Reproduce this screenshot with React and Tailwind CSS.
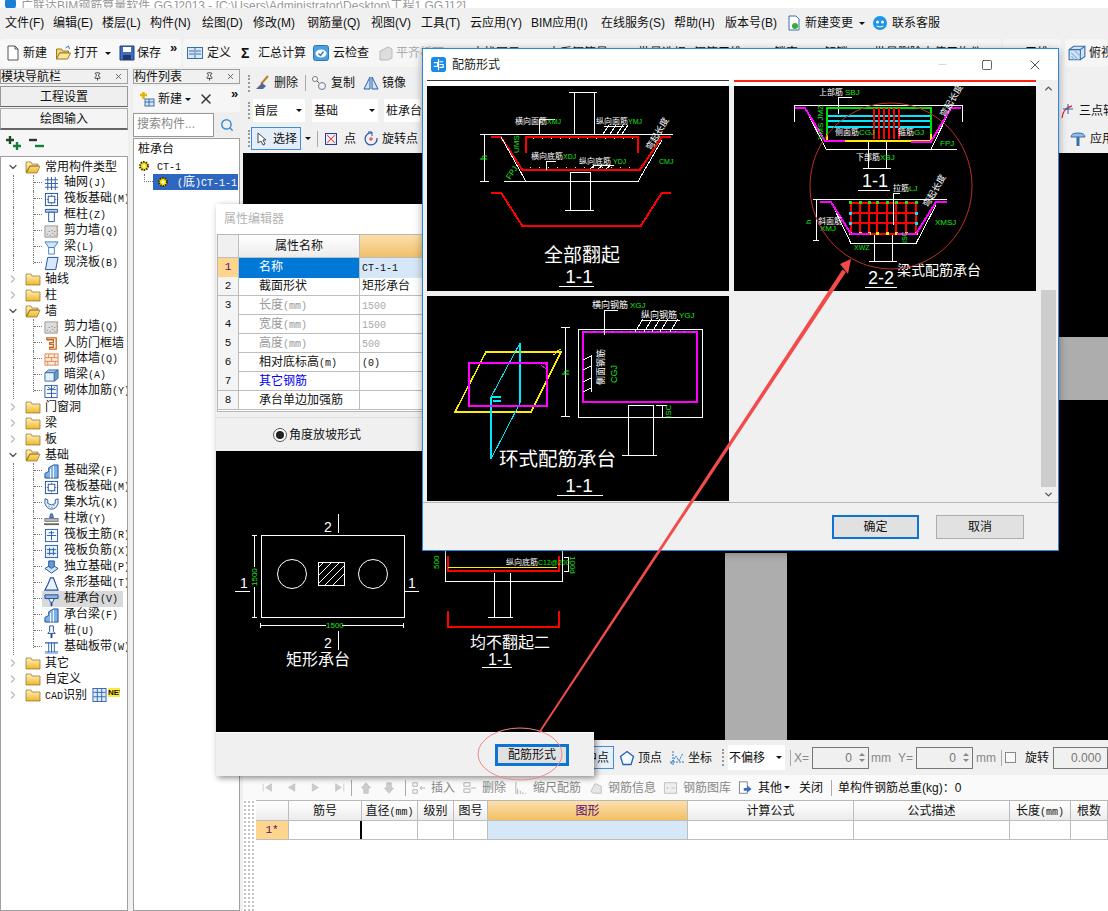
// App.jsx
import { ChevronDown, ChevronRight, ChevronUp, X, Minus, Square, Search, Pin } from 'lucide-react';

const menus = [
    ['文件(F)', 'w-[48px]'], ['编辑(E)', 'w-[49px]'], ['楼层(L)', 'w-[48px]'], ['构件(N)', 'w-[52px]'],
    ['绘图(D)', 'w-[51px]'], ['修改(M)', 'w-[54px]'], ['钢筋量(Q)', 'w-[64px]'], ['视图(V)', 'w-[50px]'],
    ['工具(T)', 'w-[49px]'], ['云应用(Y)', 'w-[61px]'], ['BIM应用(I)', 'w-[70px]'], ['在线服务(S)', 'w-[73px]'],
    ['帮助(H)', 'w-[51px]'], ['版本号(B)', 'w-[61px]'],
];

const Svg = ({ children, className = 'w-4 h-4' }) => (
    <svg viewBox="0 0 16 16" className={`${className} shrink-0`} fill="none">{children}</svg>
);

// latin runs get the narrow fixed pitch the old bitmap font has
const Mixed = ({ text }) => text.split(/([\x00-\x7f]+)/).map((part, i) => (
    /[\x00-\x7f]/.test(part)
        ? <span key={i} className="font-['Liberation_Mono'] text-[10px]">{part}</span>
        : <span key={i}>{part}</span>
));

const icons = {
    grid: <g stroke="#2a5caa"><path d="M1 4h14M1 8h14M1 12h14M4 1v14M8 1v14M12 1v14" /></g>,
    raft: <g stroke="#1d4f9c"><rect x="1.5" y="1.5" width="13" height="13" /><rect x="4.5" y="4.5" width="7" height="7" /><path d="M1 8h3M12 8h3M8 1v3M8 12v3" strokeDasharray="1 1" /></g>,
    col: <g stroke="#1d4f9c" fill="#bcd6f2"><path d="M1.5 1.5h13v3h-13z" /><path d="M5 4.5h6v10H5z" fill="#fff" /></g>,
    shear: <g><rect x="1" y="2" width="13" height="12" fill="#ddd" stroke="#999" /><path d="M3 11h1M6 12h1M9 10h1M11 12h1M5 8h1M8 7h1M11 8h1" stroke="#666" /><path d="M14.5 2v12" stroke="#e0812a" strokeDasharray="2 2" /></g>,
    beam: <g stroke="#3c7fc0" fill="#cfe5f8"><path d="M1 2h14l-4 6H5z" /><path d="M5 8h6v7H5z" fill="#fff" /></g>,
    slab: <path d="M4 1.5h11l-2.5 13h-11z" fill="#d6e8f9" stroke="#1d4f9c" />,
    door: <path d="M3 2h10v12H6v-2h4V9H6V7h4V4H3z" fill="#fff" stroke="#c9651d" strokeWidth="1.4" />,
    brick: <g stroke="#e08a55" fill="#fbe9dc"><rect x="1" y="2" width="14" height="12" /><path d="M1 6h14M1 10h14M5 2v4M11 2v4M8 6v4M4 10v4M12 10v4" /></g>,
    hide: <g stroke="#3a6ea8"><path d="M1 5l4-3h10l-4 3z" fill="#9ec5ea" /><path d="M1 5h10v9H1z" fill="#e4f0fb" /><path d="M11 5l4-3v9l-4 3z" fill="#6c9bca" /></g>,
    mesh: <g stroke="#2a5caa"><rect x="1" y="1.5" width="13" height="13" /><path d="M8 1v14M3 6h10M3 10h10M4 3l4 3 4-3" /></g>,
    fbeam: <g stroke="#1d4f9c"><path d="M1 15V10l4-2V4l5-3h5v14z" fill="#7fb0e0" /><path d="M7 15V5M10 15V2" stroke="#fff" /></g>,
    pit: <g><path d="M1 3l3 1v4q4 3 8 0V4l3-1v5q-2 6-7 6T1 8z" fill="#e4eef8" stroke="#2a5caa" /><path d="M5 11h1M8 12h1M10 10h1" stroke="#2a5caa" /></g>,
    pier: <g><path d="M6 6l1-4h2l1 4z" fill="#5f8fd0" stroke="#2a5caa" /><rect x="1" y="7" width="14" height="3" fill="#bbb" stroke="#777" /><path d="M0 13h16" stroke="#666" strokeWidth="2" /></g>,
    rmain: <g stroke="#2a5caa"><rect x="1.5" y="1.5" width="13" height="13" fill="#f4f9ff" /><path d="M8 3v10M3 8h10M5 5h6" /></g>,
    rneg: <g stroke="#2a5caa"><rect x="1.5" y="1.5" width="13" height="13" fill="#e6f1fc" /><path d="M3 6h10M3 10h10M6 4v8M10 4v8" /></g>,
    indep: <g stroke="#1d4f9c"><path d="M1 9l7-4 7 4-7 5z" fill="#cfe3f7" /><path d="M5 7V1h6v6l-3 2z" fill="#6a9ad0" /></g>,
    strip: <path d="M1 15l3-6 3-7h3l5 13z" fill="#eaf3fc" stroke="#1d4f9c" strokeWidth="1.2" />,
    cap: <g stroke="#1d4f9c"><path d="M1 3h14v4H1z" fill="#89b4df" /><path d="M5 7h6l-2 4H7z" fill="#fff" /><path d="M8 11v4" strokeWidth="2" /></g>,
    pile: <g stroke="#1d4f9c"><path d="M6 2h4v6l2 2H4l2-2z" fill="#fff" /><path d="M8 10v5" strokeWidth="2" /></g>,
    band: <g stroke="#2a5caa"><path d="M1 3h14M1 13h14" strokeWidth="1.4" /><path d="M5 3v10M11 3v10M8 3v10" /><path d="M1 14h14" stroke="#9fc3e8" strokeWidth="2" /></g>,
};

const tree = [
    { t: '常用构件类型', open: true, kids: [['grid', '轴网(J)'], ['raft', '筏板基础(M)'], ['col', '框柱(Z)'], ['shear', '剪力墙(Q)'], ['beam', '梁(L)'], ['slab', '现浇板(B)']] },
    { t: '轴线' },
    { t: '柱' },
    { t: '墙', open: true, kids: [['shear', '剪力墙(Q)'], ['door', '人防门框墙'], ['brick', '砌体墙(Q)'], ['hide', '暗梁(A)'], ['mesh', '砌体加筋(Y)']] },
    { t: '门窗洞' },
    { t: '梁' },
    { t: '板' },
    { t: '基础', open: true, kids: [['fbeam', '基础梁(F)'], ['raft', '筏板基础(M)'], ['pit', '集水坑(K)'], ['pier', '柱墩(Y)'], ['rmain', '筏板主筋(R)'], ['rneg', '筏板负筋(X)'], ['indep', '独立基础(P)'], ['strip', '条形基础(T)'], ['cap', '桩承台(V)', true], ['fbeam', '承台梁(F)'], ['pile', '桩(U)'], ['band', '基础板带(W)']] },
    { t: '其它' },
    { t: '自定义' },
    { t: 'CAD识别', cad: true },
];

const Folder = ({ open }) => (
    <svg viewBox="0 0 16 14" className="w-4 h-[14px] shrink-0">
        <defs>
            <linearGradient id="fold" x1="0" y1="0" x2="0" y2="1"><stop offset="0" stopColor="#fff3b8" /><stop offset="1" stopColor="#efb52f" /></linearGradient>
        </defs>
        {open ? (
            <path d="M1 2h5l1 2h6v2H5L2 12 1 12zM5 6h10l-3 7H1z" fill="url(#fold)" stroke="#8d6a1f" strokeWidth=".7" />
        ) : (
            <path d="M1 2h5l1 2h8v9H1z" fill="url(#fold)" stroke="#8d6a1f" strokeWidth=".7" />
        )}
    </svg>
);

function TreeGroup({ node }) {
    return (
        <>
            <div className="flex h-4 items-center">
                <div className="w-[6px] shrink-0" />
                {node.open ? <ChevronDown size={12} strokeWidth={2.5} className="text-[#555] shrink-0" /> : <ChevronRight size={12} strokeWidth={2.5} className="text-[#bbb] shrink-0" />}
                <div className="w-[6px] shrink-0" />
                <Folder open={node.open} />
                <span className="ml-[4px] whitespace-nowrap"><Mixed text={node.t} /></span>
                {node.cad && (
                    <>
                        <Svg className="w-[15px] h-[14px] ml-[5px]"><rect x=".5" y=".5" width="15" height="15" fill="#dceafa" stroke="#2a5caa" /><path d="M5.5 1v14M10.5 1v14M1 5h14M1 10h14" stroke="#2a5caa" /></Svg>
                        <span className="ml-[1px] bg-[#ffe83d] text-[8px] leading-[9px] font-bold self-start mt-[1px] w-[12px] overflow-hidden">NEW</span>
                    </>
                )}
            </div>
            {node.open && node.kids.map((k, i) => (
                <div key={i} className="flex h-4">
                    <div className="w-[12px] shrink-0" />
                    <div className="w-[20px] shrink-0 border-l border-dotted border-[#777]" />
                    <div className={`w-[9px] shrink-0 border-l border-dotted border-[#777] ${i === node.kids.length - 1 ? 'h-[9px]' : ''}`}>
                        <div className="h-2 border-b border-dotted border-[#777]" />
                    </div>
                    <div className={`flex items-center w-[81px] pl-[2px] shrink-0 ${k[2] ? 'bg-[#d9d9d9]' : ''}`}>
                        <Svg className="w-[15px] h-[15px]">{icons[k[0]]}</Svg>
                        <span className="ml-[5px] whitespace-nowrap leading-4"><Mixed text={k[1]} /></span>
                    </div>
                </div>
            ))}
        </>
    );
}

const PanelHeader = ({ title }) => (
    <div className="h-[15px] border border-[#a0a0a0] bg-[#f0f0f0] flex items-center text-[12px] leading-none overflow-hidden shrink-0">
        <span className="flex-1 whitespace-nowrap">{title}</span>
        <Pin size={9} className="mr-[12px] text-[#222]" />
        <X size={9} className="mr-[4px] text-[#444]" />
    </div>
);

const Caret = ({ className = '' }) => (
    <span className={`w-0 h-0 border-x-[3px] border-x-transparent border-t-[3px] border-t-[#111] shrink-0 ${className}`} />
);

const DocIcon = () => <Svg><path d="M3 1h7l3 3v11H3z" fill="#fff" stroke="#555" /><path d="M10 1v3h3" stroke="#555" /></Svg>;
const OpenIcon = () => <Svg className="w-[17px] h-4"><path d="M1 4h5l1 2h6v2H4l-2 6H1z" fill="#f6d578" stroke="#9a7a22" /><path d="M4 8h11l-3 6H1z" fill="#fbe59a" stroke="#9a7a22" /><path d="M10 3l3-2 1 3" stroke="#3a76c4" /></Svg>;
const SaveIcon = () => <Svg><path d="M1 1h14v14H1z" fill="#3c6fc0" stroke="#1e3f7e" /><rect x="4" y="2" width="8" height="5" fill="#fff" /><rect x="4" y="10" width="8" height="5" fill="#25386a" /></Svg>;

const ToolText = ({ children, className = '' }) => <span className={`whitespace-nowrap shrink-0 ${className}`}>{children}</span>;

function TopToolbar() {
    return (
        <div className="h-[30px] flex items-center text-[12px] shrink-0">
            <div className="h-[28px] w-[181px] bg-[#f8f8f8] rounded-sm flex items-center pl-[5px] shrink-0">
                <DocIcon /><ToolText className="ml-[2px]">新建</ToolText>
                <div className="ml-[8px]"><OpenIcon /></div><ToolText className="ml-[2px]">打开</ToolText>
                <Caret className="ml-[7px]" />
                <div className="ml-[8px]"><SaveIcon /></div><ToolText className="ml-[2px]">保存</ToolText>
                <span className="ml-[9px] mb-3 text-[13px] font-bold leading-none">»</span>
            </div>
            <div className="h-[28px] w-[818px] ml-[2px] bg-[#f6f6f6] rounded-sm flex items-center pl-[4px] shrink-0 overflow-hidden">
                <Svg><rect x=".5" y="2.5" width="15" height="11" fill="#d9e8f8" stroke="#3a6ea8" /><path d="M2 6h5M2 9h5M9 6h5M9 9h5M8 3v10" stroke="#3a6ea8" /></Svg>
                <ToolText className="ml-[4px]">定义</ToolText>
                <span className="ml-[10px] font-bold text-[14px] leading-none w-[12px] shrink-0">Σ</span>
                <ToolText className="ml-[5px]">汇总计算</ToolText>
                <Svg className="w-4 h-4 ml-[7px]"><rect x=".5" y=".5" width="15" height="15" rx="2" fill="#4a9fe0" stroke="#2a76ba" /><ellipse cx="8" cy="8.5" rx="5.5" ry="4" fill="#fff" /><path d="M5.5 8.5l2 2 3-4" stroke="#2a76ba" strokeWidth="1.3" /></Svg>
                <ToolText className="ml-[4px]">云检查</ToolText>
                <Svg className="w-4 h-4 ml-[9px]"><path d="M2 6l8-4 4 2v9l-4 2H2z" fill="#ddd" stroke="#bbb" /></Svg>
                <ToolText className="ml-[2px] w-[76px] text-[#aaa]">平齐板顶</ToolText>
                <ToolText className="w-[76px]">查找图元</ToolText>
                <ToolText className="w-[90px]">查看钢筋量</ToolText>
                <ToolText className="w-[56px]">批量选择</ToolText>
                <ToolText className="w-[80px]">钢筋三维</ToolText>
                <ToolText className="w-[50px]">锁定</ToolText>
                <ToolText className="w-[50px]">解锁</ToolText>
                <ToolText>批量删除未使用构件</ToolText>
            </div>
            <div className="h-[28px] ml-[2px] w-[58px] bg-[#f6f6f6] rounded-sm flex items-center pl-[22px] shrink-0">三维</div>
            <div className="h-[28px] ml-[4px] flex-1 bg-[#f6f6f6] rounded-sm flex items-center pl-[3px] overflow-hidden">
                <Svg className="w-[18px] h-[18px]"><path d="M1 5l4-3h10v9l-4 3H1z" fill="#cfe3f7" stroke="#3a6ea8" /><path d="M1 5h10v9M11 5l4-3" stroke="#3a6ea8" /><path d="M3 8l6 6M3 11l3 3M6 6l5 5" stroke="#8fb6dc" /></Svg>
                <ToolText className="ml-[3px]">俯视</ToolText>
            </div>
        </div>
    );
}

function LeftNav() {
    return (
        <div className="w-[128px] flex flex-col shrink-0">
            <PanelHeader title="模块导航栏" />
            <button className="h-[21px] mt-[2px] border border-[#999] border-b-[#666] bg-[#efefef] text-[12px] shrink-0">工程设置</button>
            <button className="h-[22px] mt-[1px] border border-[#aaa] border-b-2 border-b-[#666] bg-[#f4f4f4] text-[12px] shrink-0">绘图输入</button>
            <div className="h-[26px] flex items-center pl-[5px] bg-[#f6f6f6] shrink-0">
                <Svg><path d="M1 5h8M5 1v8" stroke="#1c4a2a" strokeWidth="2.4" /><path d="M8 11h8M12 7v8" stroke="#12803a" strokeWidth="2.4" /></Svg>
                <Svg className="w-4 h-4 ml-[7px]"><path d="M1 5h8" stroke="#333" strokeWidth="2.4" /><path d="M7 11h9" stroke="#12803a" strokeWidth="2.4" /></Svg>
            </div>
            <div className="flex-1 border border-[#a0a0a0] bg-white pt-[1px] text-[12px] overflow-hidden text-[#111]">
                <div className="h-px" />
                {tree.map((n) => <TreeGroup key={n.t} node={n} />)}
            </div>
        </div>
    );
}

const Gear = () => (
    <svg viewBox="0 0 12 12" className="w-3 h-3 shrink-0"><circle cx="6" cy="6" r="4" fill="#ffe000" stroke="#3a3000" strokeDasharray="1.5 1" strokeWidth="2" /><circle cx="6" cy="6" r="1.5" fill="#fff" /></svg>
);

function ListPanel() {
    return (
        <div className="w-[107px] ml-[5px] flex flex-col shrink-0">
            <PanelHeader title="构件列表" />
            <div className="h-[26px] mt-[2px] bg-[#f6f6f6] flex items-center pl-[6px] text-[12px] shrink-0">
                <Svg><path d="M1 4h7M4.5 1v7" stroke="#e3b400" strokeWidth="2.5" /><rect x="6" y="8" width="9" height="7" fill="#dbe9f8" stroke="#3a6ea8" /><path d="M6 11h9M10 8v7" stroke="#3a6ea8" /></Svg>
                <span className="ml-[3px] whitespace-nowrap">新建</span>
                <Caret className="ml-[3px]" />
                <X size={16} strokeWidth={2.2} className="ml-[7px] text-[#333] shrink-0" />
                <span className="ml-[17px] mb-3 text-[13px] font-bold leading-none">»</span>
            </div>
            <div className="h-[24px] mt-[1px] flex shrink-0">
                <div className="w-[81px] border border-[#999] bg-white text-[12px] text-[#888] pl-[3px] leading-[21px] whitespace-nowrap overflow-hidden">搜索构件...</div>
                <div className="flex-1 bg-[#eee] flex items-center justify-center"><Search size={14} strokeWidth={2.5} className="text-[#3a8fd8]" /></div>
            </div>
            <div className="flex-1 mt-[1px] border border-[#a0a0a0] bg-white text-[12px] text-[#111] overflow-hidden">
                <div className="pl-[4px] h-[20px] leading-[20px]">桩承台</div>
                <div className="flex items-center h-[14px] pl-[4px]"><Gear /><span className="ml-[7px]"><Mixed text="CT-1" /></span></div>
                <div className="flex h-4 mt-[1px]">
                    <div className="w-[9px] ml-[10px] h-[8px] border-l border-b border-dotted border-[#777] shrink-0" />
                    <div className="w-[85px] bg-[#2f66bf] text-white flex items-center pl-[4px] whitespace-nowrap overflow-hidden shrink-0">
                        <Gear />
                        <span className="ml-[8px]"><Mixed text="(" />底<Mixed text=")CT-1-1" /></span>
                    </div>
                </div>
            </div>
        </div>
    );
}

function RightToolbars() {
    const grip = <div className="w-[3px] h-[17px] border-l-2 border-dotted border-[#999] mx-[3px] shrink-0" />;
    return (
        <div className="text-[12px] shrink-0">
            <div className="h-[28px] flex items-center pl-[2px] bg-[#f0f0f0]">
                {grip}
                <Svg><path d="M14 1L7 9" stroke="#b7842f" strokeWidth="2" /><path d="M8 8l-6 6h7l3-3z" fill="#3a6ea8" /><path d="M4 13l5-4" stroke="#d33" /></Svg>
                <span className="ml-[4px] whitespace-nowrap">删除</span>
                <div className="w-px h-4 bg-[#aaa] ml-[7px] shrink-0" />
                <Svg className="w-4 h-4 ml-[5px]"><circle cx="4" cy="4" r="2.5" stroke="#777" fill="#fff" /><circle cx="11" cy="11" r="3.5" stroke="#777" fill="#eef" /><path d="M6 6l2 2" stroke="#3a6ea8" /></Svg>
                <span className="ml-[4px] whitespace-nowrap">复制</span>
                <Svg className="w-4 h-4 ml-[8px]"><path d="M7 2L1 14h6zM9 2l6 12H9z" fill="#cfe3f7" stroke="#2a5caa" /></Svg>
                <span className="ml-[3px] whitespace-nowrap">镜像</span>
            </div>
            <div className="h-[27px] flex items-center pl-[2px] bg-[#f0f0f0]">
                {grip}
                <div className="w-[52px] h-[23px] bg-white flex items-center pl-[1px] ml-[-1px] shrink-0"><span className="flex-1">首层</span><Caret className="mr-[3px]" /></div>
                <div className="w-[66px] h-[23px] bg-white flex items-center pl-[2px] ml-[7px] shrink-0"><span className="flex-1">基础</span><Caret className="mr-[3px]" /></div>
                <div className="w-[36px] h-[23px] bg-white flex items-center pl-[2px] ml-[6px] shrink-0 whitespace-nowrap">桩承台</div>
                <div className="ml-auto w-[48px] flex items-center overflow-hidden whitespace-nowrap">
                    <Svg><path d="M2 15Q3 5 12 3" stroke="#d33" strokeWidth="1.3" /><path d="M8 1v10M3 6h10" stroke="#2a5caa" /></Svg>
                    <span className="ml-[3px]">三点轴</span>
                </div>
            </div>
            <div className="h-[29px] flex items-center pl-[2px] bg-[#f0f0f0]">
                {grip}
                <div className="w-[50px] h-[23px] border border-[#3a8fd8] bg-[#e3eefa] flex items-center pl-[4px] ml-[-3px] shrink-0">
                    <svg viewBox="0 0 12 14" className="w-3 h-[14px] shrink-0"><path d="M2 1v10l3-2 2 4 2-1-2-4h3z" fill="#fff" stroke="#444" /></svg>
                    <span className="ml-[5px] whitespace-nowrap">选择</span>
                </div>
                <Caret className="ml-[4px]" />
                <div className="w-px h-4 bg-[#aaa] ml-[6px] shrink-0" />
                <Svg className="w-3 h-3 ml-[7px]"><rect x=".7" y=".7" width="14.6" height="14.6" fill="#eef2f8" stroke="#2a3f8c" strokeWidth="1.4" /><path d="M3 3l10 10M13 3L3 13" stroke="#d33" strokeWidth="1.4" /></Svg>
                <span className="ml-[7px] whitespace-nowrap">点</span>
                <Svg className="w-4 h-4 ml-[7px]"><path d="M9 2a6 6 0 1 0 5 5" stroke="#2a5caa" strokeWidth="1.3" /><path d="M5 1h4v4" stroke="#2a5caa" /><path d="M6 8h4M8 6v4" stroke="#d33" /></Svg>
                <span className="ml-[3px] whitespace-nowrap">旋转点</span>
                <div className="ml-auto w-[38px] flex items-center overflow-hidden whitespace-nowrap">
                    <Svg><path d="M1 6q0-4 7-4t7 4z" fill="#8fbce8" stroke="#3a6ea8" /><path d="M8 6v9" stroke="#3a6ea8" strokeWidth="3" /></Svg>
                    <span className="ml-[4px]">应用</span>
                </div>
            </div>
        </div>
    );
}

function Spin({ value }) {
    return (
        <div className="w-[57px] h-[22px] border border-[#777] bg-[#f0f0f0] flex items-center justify-end text-[12px] text-[#777] shrink-0">
            {value}
            <div className="ml-[7px] mr-[3px] flex flex-col gap-[3px]">
                <span className="block w-0 h-0 border-x-[3px] border-x-transparent border-b-[3px] border-b-[#888]" />
                <span className="block w-0 h-0 border-x-[3px] border-x-transparent border-t-[3px] border-t-[#888]" />
            </div>
        </div>
    );
}

function StatusBar() {
    const S = 'whitespace-nowrap shrink-0';
    return (
        <div className="h-[35px] bg-[#f0f0f0] flex items-center text-[12px] shrink-0 overflow-hidden">
            <div className="w-[337px] shrink-0" />
            <div className="w-[34px] h-[23px] border border-[#3a8fd8] bg-[#e6f0fa] flex items-center justify-center text-[#111] shrink-0">中点</div>
            <Svg className="w-4 h-4 ml-[5px]"><path d="M8 1.5l6.5 5-2.500 8H4l-2.500-8z" stroke="#1f62b8" strokeWidth="1.3" fill="#f4f9ff" /></Svg>
            <span className={`ml-[3px] ${S}`}>顶点</span>
            <Svg className="w-4 h-4 ml-[7px]"><path d="M1 12h14M4 1v14M2 14l5-8 3 5 4-8" stroke="#2a7ac8" strokeDasharray="2 1" /></Svg>
            <span className={`ml-[3px] ${S}`}>坐标</span>
            <div className="w-[3px] h-[17px] border-l-2 border-dotted border-[#999] ml-[10px] shrink-0" />
            <div className="w-[57px] h-[25px] bg-white flex items-center pl-[1px] ml-[3px] whitespace-nowrap shrink-0"><span className="flex-1">不偏移</span><Caret className="mr-[3px]" /></div>
            <div className="w-px h-4 bg-[#aaa] ml-[5px] shrink-0" />
            <span className={`ml-[3px] text-[#888] w-[18px] ${S}`}>X=</span>
            <Spin value="0" />
            <span className={`ml-[2px] text-[#888] w-[27px] ${S}`}>mm</span>
            <span className={`text-[#888] w-[18px] ${S}`}>Y=</span>
            <Spin value="0" />
            <span className={`ml-[3px] text-[#888] w-[24px] ${S}`}>mm</span>
            <div className="w-px h-4 bg-[#aaa] ml-[1px] shrink-0" />
            <div className="w-[11px] h-[11px] border border-[#888] bg-[#f8f8f8] ml-[3px] shrink-0" />
            <span className={`ml-[9px] ${S}`}>旋转</span>
            <div className="w-[55px] h-[22px] ml-[4px] border border-[#777] bg-[#f0f0f0] text-[#777] flex items-center pl-[17px] shrink-0">0.000</div>
        </div>
    );
}

const tri = (d) => <path d={d} fill="#ccc" stroke="#bbb" />;

function BottomToolbar() {
    const grey = 'text-[#888] whitespace-nowrap shrink-0';
    return (
        <div className="h-[25px] bg-[#fafafa] flex items-center text-[12px] shrink-0 pl-[19px]">
            <Svg className="w-[10px] h-[13px]">{tri('M2 2v12M15 2L6 8l9 6z')}</Svg>
            <Svg className="w-[10px] h-[13px] ml-[14px]">{tri('M14 2L4 8l10 6z')}</Svg>
            <Svg className="w-[10px] h-[13px] ml-[15px]">{tri('M2 2l10 6-10 6z')}</Svg>
            <Svg className="w-[10px] h-[13px] ml-[14px]">{tri('M14 2v12M1 2l9 6-9 6z')}</Svg>
            <div className="w-px h-4 bg-[#aaa] ml-[6px] shrink-0" />
            <Svg className="w-3 h-3 ml-[8px]">{tri('M8 1l6 7h-3v7H5V8H2z')}</Svg>
            <Svg className="w-3 h-3 ml-[11px]">{tri('M8 15l6-7h-3V1H5v7H2z')}</Svg>
            <div className="w-px h-4 bg-[#aaa] ml-[10px] shrink-0" />
            <Svg className="w-4 h-[14px] ml-[5px]"><path d="M1 2h5v4H1zM1 10h5v4H1zM9 8h6M11 6L9 8l2 2" stroke="#aaa" /></Svg>
            <span className={`${grey} ml-[4px]`}>插入</span>
            <Svg className="w-4 h-[14px] ml-[7px]"><path d="M1 2h7v4H1zM1 9h7v4H1zM9 8h6" stroke="#aaa" /></Svg>
            <span className={`${grey} ml-[4px]`}>删除</span>
            <Svg className="w-[14px] h-[14px] ml-[9px]"><path d="M1 1v14M3 9v6M6 11v4M9 13v2M12 14v1" stroke="#aaa" /></Svg>
            <span className={`${grey} ml-[4px]`}>缩尺配筋</span>
            <Svg className="w-[14px] h-[14px] ml-[8px]"><path d="M2 12l5-9 7 3v8H5z" fill="#e5e5e5" stroke="#bbb" /></Svg>
            <span className={`${grey} ml-[5px]`}>钢筋信息</span>
            <Svg className="w-[15px] h-[14px] ml-[7px]"><rect x="1" y="2" width="14" height="12" fill="#eee" stroke="#bbb" /><path d="M3 8h3M9 8h4" stroke="#bbb" /></Svg>
            <span className={`${grey} ml-[5px]`}>钢筋图库</span>
            <Svg className="w-[15px] h-[14px] ml-[7px]"><rect x="1" y="1" width="9" height="13" fill="#fff" stroke="#778" /><path d="M6 8h4V5l5 4-5 4v-2H6z" fill="#3a6ec4" /></Svg>
            <span className="ml-[5px] whitespace-nowrap shrink-0">其他</span>
            <Caret className="ml-[2px]" />
            <span className="ml-[9px] whitespace-nowrap shrink-0">关闭</span>
            <div className="w-px h-4 bg-[#aaa] ml-[8px] shrink-0" />
            <span className="ml-[6px] whitespace-nowrap shrink-0">单构件钢筋总重(kg)：0</span>
        </div>
    );
}

const rebarHeads = ['', '筋号', '直径(mm)', '级别', '图号', '图形', '计算公式', '公式描述', '长度(mm)', '根数'];

function RebarTable() {
    return (
        <div className="flex flex-1 min-h-0 bg-white">
            <div className="w-[13px] shrink-0 bg-[radial-gradient(#c4c4c4_1px,transparent_1px)] bg-[length:4px_4px]" />
            <div className="flex-1 text-[12px]">
                <div className="grid grid-cols-[33px_73px_56px_36px_34px_200px_166px_156px_61px_37px] border-t border-[#b8b8b8] h-[21px]">
                    {rebarHeads.map((h, i) => (
                        <div key={i} className={`flex items-center justify-center border-r border-b border-[#bdbdbd] whitespace-nowrap overflow-hidden ${i === 5 ? 'bg-linear-to-b from-[#fbe0ae] to-[#f3bf62] text-[#5a0a78]' : 'bg-linear-to-b from-white to-[#ececec]'}`}><span><Mixed text={h} /></span></div>
                    ))}
                </div>
                <div className="grid grid-cols-[33px_73px_56px_36px_34px_200px_166px_156px_61px_37px] border-b border-[#bdbdbd] h-[19px]">
                    {rebarHeads.map((h, i) => (
                        <div key={i} className={`flex items-center justify-center border-r ${i === 1 ? 'border-r-2 border-black' : 'border-[#bdbdbd]'} ${i === 0 ? 'bg-[#fdd58d] text-[#5a0a78] font-[\'Liberation_Mono\'] text-[11px]' : i === 5 ? 'bg-[#d6e8f7]' : ''}`}>{i === 0 ? '1*' : ''}</div>
                    ))}
                </div>
            </div>
        </div>
    );
}

const propRows = [
    ['名称', 'CT-1-1'], ['截面形状', '矩形承台'], ['长度(mm)', '1500', 1], ['宽度(mm)', '1500', 1],
    ['高度(mm)', '500', 1], ['相对底标高(m)', '(0)'], ['其它钢筋', '', 0, 1], ['承台单边加强筋', ''],
];

const W = ({ d, c = '#fff', w = 1 }) => <path d={d} fill="none" stroke={c} strokeWidth={w} />;
const T = ({ x, y, s = 9, c = '#fff', r, a, children }) => (
    <text x={x} y={y} fontSize={s} fill={c} textAnchor={a} transform={r !== undefined ? `rotate(${r} ${x} ${y})` : undefined}>{children}</text>
);

function PreviewDrawing() {
    return (
        <svg viewBox="216 452 378 281" className="w-[378px] h-[281px] block" shapeRendering="crispEdges">
            <defs><clipPath id="hat"><rect x="318" y="563" width="27" height="24" /></clipPath></defs>
            <W d="M261.5 536.5H404.5V618.5H261.5Z" />
            <circle cx="292" cy="575" r="14.5" stroke="#fff" fill="none" shapeRendering="auto" />
            <circle cx="373" cy="575" r="14.5" stroke="#fff" fill="none" shapeRendering="auto" />
            <W d="M318.5 563.5H344.5V586.5H318.5Z" />
            <g clipPath="url(#hat)"><W d="M300 587L324 563M308 587L332 563M316 587L340 563M324 587L348 563M332 587L356 563" /></g>
            <W d="M338.5 515V534M338.5 632V651M235 592.5H250M404 592.5H419" />
            <W d="M254.5 536V619M252 536.5H257M252 618.5H257M260 626.5H404M260.5 624V629M403.500 624V629" />
            <T x="324" y="533" s="14">2</T>
            <T x="324" y="649" s="14">2</T>
            <T x="240" y="589" s="14">1</T>
            <T x="408" y="589" s="14">1</T>
            <rect x="250" y="568" width="8" height="20" fill="#000" />
            <T x="257" y="587" s="8" c="#19e619" r={-90}>1500</T>
            <rect x="326" y="622" width="16" height="8" fill="#000" />
            <T x="326" y="629" s="8" c="#19e619">1500</T>
            <T x="286" y="666" s="16">矩形承台</T>
            <W d="M447.5 557V571.5H558.5V557" c="#ff0000" w="2" />
            <W d="M448 568.5H557" c="#ffee00" />
            <W d="M445.5 550V582.5H562.5V550" />
            <W d="M494.5 574V618.5H510.5V574M488 618.5H513" />
            <W d="M447.5 612V627.5H558.5V612" c="#ff0000" w="2" />
            <W d="M564 558H568V572H564" />
            <T x="439" y="570" s="8" c="#19e619" r={-90}>500</T>
            <T x="570" y="557" s="8" c="#19e619" r={90}>100d</T>
            <T x="506" y="566" s="8">纵向底筋</T>
            <T x="538" y="566" s="7" c="#19e619">C12@200</T>
            <T x="470" y="649" s="16">均不翻起二</T>
            <T x="488" y="666" s="16">1-1</T>
            <W d="M482 668.5H512" />
        </svg>
    );
}

function PropertyDialog() {
    return (
        <div className="absolute left-[216px] top-[204px] w-[378px] h-[572px] bg-[#f0f0f0] shadow-[2px_2px_6px_rgba(0,0,0,0.45)] flex flex-col text-[12px]">
            <div className="h-[30px] bg-white flex items-center pl-[8px] text-[#b4b4b4] shrink-0">属性编辑器</div>
            <div className="h-[178px] ml-[1px] border-x border-y border-[#b8b8b8] bg-white overflow-hidden shrink-0">
                <div className="grid grid-cols-[21px_121px_1fr] h-[23px] border-b border-[#bdbdbd]">
                    <div className="bg-[#f0f0f0] border-r border-[#bdbdbd]" />
                    <div className="bg-linear-to-b from-white to-[#ececec] border-r border-[#bdbdbd] flex items-center justify-center">属性名称</div>
                    <div className="bg-linear-to-b from-[#fbdfa8] to-[#f0c06a]" />
                </div>
                {propRows.map(([name, val, dim, link], i) => (
                    <div key={name} className="grid grid-cols-[21px_121px_1fr] h-[19px] border-b border-[#bdbdbd] leading-[18px] whitespace-nowrap">
                        <div className={`border-r border-[#bdbdbd] text-center text-[11px] font-['Liberation_Mono'] ${i === 0 ? 'bg-[#fdd58d] text-[#5a0a78]' : 'bg-[#f4f4f4]'}`}>{i + 1}</div>
                        <div className={`border-r border-[#bdbdbd] pl-[20px] ${i === 0 ? 'bg-[#0078d7] text-white' : dim ? 'text-[#999]' : link ? 'text-[#0000ee]' : 'text-[#111]'}`}><Mixed text={name} /></div>
                        <div className={`pl-[2px] ${i === 0 ? 'bg-[#d6e8f7]' : dim ? 'text-[#aaa]' : ''}`}><Mixed text={val} /></div>
                    </div>
                ))}
            </div>
            <div className="h-[5px] shrink-0" />
            <div className="h-[34px] bg-[#f0f0f0] border-t border-[#ddd] flex items-center pl-[57px] shrink-0">
                <span className="w-[14px] h-[14px] rounded-full border border-[#555] bg-white flex items-center justify-center shrink-0"><span className="w-2 h-2 rounded-full bg-[#222]" /></span>
                <span className="ml-[2px]">角度放坡形式</span>
            </div>
            <div className="h-[281px] bg-black shrink-0"><PreviewDrawing /></div>
            <div className="flex-1 flex items-center justify-end pr-[25px] border-t border-white">
                <button className="w-[74px] h-[22px] border-[3px] border-[#0d75d1] bg-[#e1e1e1] text-[12px] leading-none">配筋形式</button>
            </div>
        </div>
    );
}

function PanelOne() {
    const dots = [];
    for (let x = 530; x < 636; x += 9) dots.push(<rect key={x} x={x} y="167" width="1" height="1" fill="#ff0" />);
    for (let x = 533; x < 634; x += 9) dots.push(<rect key={`t${x}`} x={x} y="138" width="1" height="1" fill="#ff0" />);
    return (
        <svg viewBox="427 86 302 205" className="w-[302px] h-[205px] block bg-black" shapeRendering="crispEdges">
            <W d="M569 92.5H597M574.5 92V134M594.5 92V134M489 134.5H673" />
            <W d="M491 137H501L522 169.5H640L662 137H671" c="#ff0000" w="2" />
            <W d="M526 153V137H638V153" c="#ff0000" w="2" />
            {dots}
            <W d="M501 137L526 181.5H504M504 181.5H638L662 140M484.5 134V182M480 134.5H489M480 181.5H489" />
            <W d="M570.5 172V210M590.5 172V210M565 210.5H594M570.5 172.5H590.5" />
            <W d="M491 192.5H501L522 225.5H641L662 192.5H671" c="#ff0000" w="2" />
            <W d="M539 134V119H555M603 134l6-9M610 134l6-9M617 134l6-9M622 134l6-9M604 126H624M546 170V161H556M590 169l5-4M598 169l5-4M606 169l5-4M593 165H614" />
            <T x="515" y="124" s="8">横向面筋</T><T x="547" y="124" s="7" c="#19e619">XMJ</T>
            <T x="596" y="124" s="8">纵向面筋</T><T x="628" y="124" s="7" c="#19e619">YMJ</T>
            <T x="531" y="159" s="8">横向底筋</T><T x="563" y="159" s="7" c="#19e619">XDJ</T>
            <T x="579" y="164" s="8">纵向底筋</T><T x="613" y="164" s="7" c="#19e619">YDJ</T>
            <T x="659" y="164" s="7" c="#19e619">CMJ</T>
            <T x="487" y="160" s="9" c="#19e619" r={-90}>h</T>
            <T x="519" y="153" s="8" c="#19e619" r={-90}>UMS</T>
            <T x="510" y="180" s="8" c="#19e619" r={-55}>FPJ</T>
            <T x="651" y="151" s="9" r={-60}>弯起长度</T>
            <T x="582" y="262" s="19" a="middle">全部翻起</T>
            <T x="579" y="283" s="19" a="middle">1-1</T>
            <W d="M559 286.5H594" />
        </svg>
    );
}

function PanelTwo() {
    const marks = [];
    [850, 860, 869, 877, 887, 896, 906, 916].forEach((x) => {
        marks.push(<rect key={`g${x}`} x={x - 1} y="201" width="3" height="3" fill="#19e619" />);
        marks.push(<rect key={`y${x}`} x={x - 1} y="232" width="3" height="3" fill="#ffee00" />);
    });
    [213, 223].forEach((y) => {
        marks.push(<rect key={`l${y}`} x="849" y={y - 1} width="3" height="3" fill="#00e8ff" />);
        marks.push(<rect key={`r${y}`} x="915" y={y - 1} width="3" height="3" fill="#00e8ff" />);
    });
    return (
        <svg viewBox="734 86 302 205" className="w-[302px] h-[205px] block bg-black" shapeRendering="crispEdges">
            <W d="M794 105.5H962M826 149.5H957M805 108L826 149M951 108L931 149M794 105V122M962 105V122" />
            <W d="M868.5 141V168M886.5 141V168M863 168.5H891" />
            <W d="M838 114V97H852" />
            <W d="M827 134V108H931V134" c="#00e000" w="2" />
            <W d="M827 134V141H931V134" c="#ffee00" w="2" />
            <W d="M828 116H930M828 121H930M828 127H930" c="#00e8ff" w="2" />
            <W d="M874 108V139M879 108V139M884 108V139M889 108V139M894 108V139M899 108V139" c="#ff0000" w="2" />
            <W d="M795 108H805L825 141H845M911 141.5H931L951 108H961" c="#ff00ff" w="2" />
            <T x="819" y="95" s="8">上部筋</T><T x="845" y="95" s="8" c="#19e619">SBJ</T>
            <T x="835" y="135" s="8">侧面筋</T><T x="859" y="135" s="8" c="#19e619">CGJ</T>
            <T x="898" y="135" s="8">箍筋</T><T x="914" y="135" s="8" c="#19e619">GJ</T>
            <T x="856" y="160" s="8">下部筋</T><T x="880" y="160" s="8" c="#19e619">XBJ</T>
            <T x="940" y="146" s="8" c="#19e619">FPJ</T>
            <T x="823" y="140" s="8" c="#19e619" r={-90}>XMS JMZ</T>
            <T x="945" y="118" s="9" r={-60}>弯起长度</T>
            <T x="875" y="187" s="18" a="middle">1-1</T>
            <W d="M858 190.5H890" />
            <W d="M819 199.5H947M816 199V240M813 199.5H819M813 240H819M831 202L851 243.5H916L936 205" />
            <W d="M874.5 234V261M892.5 234V261M869 261.5H897" />
            <W d="M850 202.5H916M850 213H916M850 223H916M850 233.5H916M850.5 202V234M860 202V234M869 202V234M877 202V234M887 202V234M896 202V234M906 202V234M916 202V234" c="#ff0000" w="2" />
            {marks}
            <W d="M820 202H831L851 234H870M897 234H916L936 202H947" c="#ff00ff" w="2" />
            <W d="M893.5 225V193H900" />
            <T x="893" y="191" s="8">拉筋</T><T x="909" y="191" s="8" c="#19e619">LJ</T>
            <T x="818" y="224" s="8">斜面筋</T><T x="820" y="231" s="8" c="#19e619">XMJ</T>
            <T x="935" y="225" s="8" c="#19e619">XMSJ</T>
            <T x="854" y="250" s="7" c="#19e619">XWZ</T>
            <T x="811" y="224" s="8" c="#19e619" r={-90}>h</T>
            <T x="907" y="243" s="7" c="#19e619" r={-90}>ISC</T>
            <T x="928" y="208" s="9" r={-60}>弯起长度</T>
            <T x="881" y="284" s="18" a="middle">2-2</T>
            <W d="M865 287.5H897" />
            <T x="897" y="275" s="14">梁式配筋承台</T>
        </svg>
    );
}

function PanelThree() {
    const ticks = [];
    for (let x = 585; x < 697; x += 9) ticks.push(<rect key={x} x={x} y="331" width="1" height="1" fill="#00e8ff" />);
    return (
        <svg viewBox="427 296 302 205" className="w-[302px] h-[205px] block bg-black" shapeRendering="crispEdges">
            <W d="M486 352H561L531 412H455Z" c="#ffee00" w="1.5" />
            <W d="M520 343L491 397M491 459L520 403" c="#00e8ff" />
            <W d="M520 343V403M491 397V459M491 397H501M493 401H501" c="#00e8ff" w="2" />
            <W d="M469 363H547V406H469Z" c="#ff00ff" w="1.5" />
            <W d="M541 365l5 4M543 362l5 4" c="#ff00ff" />
            <W d="M555 352l6-3M553 355l5-3" c="#ffee00" />
            <W d="M578.5 329.5H702.5V417.5H578.5ZM565.5 327V417M561 327.5H570M561 416.5H570" />
            <W d="M583 332H697V402H583Z" c="#ff00ff" w="1.5" />
            {ticks}
            <W d="M628.5 405.5H653.5M628.5 405V455M653.5 405V455M622 455.5H657M656 405.5H667M662.5 405V417" />
            <W d="M604 335V310H618M635 332l8-13M644 332l8-13M652 332l8-13M660 332l8-13M670 332l8-13M642 320H680M591 355V392M583 360l8-4M583 370l8-4M583 382l8-4M583 392l8-4" />
            <T x="592" y="308" s="9">横向钢筋</T><T x="630" y="308" s="8" c="#19e619">XGJ</T>
            <T x="641" y="318" s="9">纵向钢筋</T><T x="679" y="318" s="8" c="#19e619">YGJ</T>
            <T x="604" y="385" s="9" r={-90}>侧面钢筋</T>
            <T x="617" y="383" s="9" c="#19e619" r={-90}>CGJ</T>
            <T x="569" y="375" s="9" c="#19e619" r={-90}>h</T>
            <T x="671" y="418" s="8" c="#19e619" r={-90}>ISC</T>
            <T x="499" y="466" s="19.5">环式配筋承台</T>
            <T x="579" y="492" s="19" a="middle">1-1</T>
            <W d="M557 495.5H603" />
        </svg>
    );
}

function RebarDialog() {
    return (
        <div className="absolute left-[422px] top-[48px] w-[637px] h-[503px] border border-[#2b88d8] bg-[#f0f0f0] shadow-[0_2px_8px_rgba(0,0,0,0.35)] flex flex-col text-[12px]">
            <div className="h-[31px] bg-white flex items-center pl-[8px] shrink-0">
                <svg viewBox="0 0 16 16" className="w-[15px] h-[15px] shrink-0"><rect width="16" height="16" rx="3" fill="#1a8ae8" /><path d="M8 2v12M3 6h4v4H3M9 5h4M9 8h4v3H9" stroke="#fff" strokeWidth="1.2" fill="none" /></svg>
                <span className="ml-[6px] text-[#222]">配筋形式</span>
                <Minus size={13} strokeWidth={1} className="ml-auto mr-[32px] text-[#bbb]" />
                <Square size={12} strokeWidth={1.3} className="mr-[34px] text-[#111]" />
                <X size={16} strokeWidth={1.1} className="mr-[15px] text-[#111]" />
            </div>
            <div className="h-[422px] flex shrink-0 bg-[#f0f0f0]">
                <div className="w-[614px] pl-[4px] shrink-0">
                    <div className="grid grid-cols-[302px_302px] gap-x-[5px] h-[6px] bg-white">
                        <div className="border-t border-[#333]" />
                        <div className="border-t-2 border-[#f21]" />
                    </div>
                    <div className="grid grid-cols-[302px_302px] gap-x-[5px] gap-y-[5px] bg-[#f0f0f0]">
                        <PanelOne />
                        <PanelTwo />
                        <PanelThree />
                    </div>
                </div>
                <div className="w-[15px] ml-[4px] flex flex-col items-center shrink-0">
                    <div className="h-[16px] flex items-center"><ChevronUp size={11} strokeWidth={3} className="text-[#555]" /></div>
                    <div className="h-[194px]" />
                    <div className="h-[197px] w-full bg-[#cdcdcd]" />
                    <div className="flex-1 flex items-center"><ChevronDown size={11} strokeWidth={3} className="text-[#555]" /></div>
                </div>
            </div>
            <div className="flex-1 border-t border-[#b8b8b8] flex items-center pl-[409px] gap-[17px]">
                <button className="w-[87px] h-[24px] border-2 border-[#0d75d1] bg-[#e1e1e1]">确定</button>
                <button className="w-[88px] h-[24px] border border-[#adadad] bg-[#e1e1e1]">取消</button>
            </div>
        </div>
    );
}

export default function App() {
    return (
        <div className="relative w-[1108px] h-[911px] overflow-hidden bg-[#f0f0f0] text-[#111] flex flex-col font-['Liberation_Sans','Noto_Sans_CJK_SC',sans-serif]">
            <div className="h-2 bg-white flex items-end overflow-hidden text-[12px] text-[#999] pl-[5px] shrink-0">
                <span className="w-[11px] h-[11px] bg-[#1a7fd4] rounded-sm shrink-0 -mb-[1px]" />
                <span className="ml-[5px] whitespace-nowrap -mb-[7px]">广联达BIM钢筋算量软件 GGJ2013 - [C:\Users\Administrator\Desktop\工程1.GGJ12]</span>
            </div>
            <div className="h-[30px] flex items-center pl-[5px] text-[12px] shrink-0">
                {menus.map(([m, w]) => <span key={m} className={`${w} whitespace-nowrap shrink-0`}>{m}</span>)}
                <Svg><path d="M3 1h7l3 3v11H3z" fill="#fff" stroke="#3a6ea8" /><circle cx="9" cy="11" r="3" fill="#3aa83a" /></Svg>
                <span className="ml-[3px] whitespace-nowrap">新建变更</span>
                <Caret className="ml-[6px]" />
                <Svg className="w-4 h-4 ml-[7px]"><circle cx="8" cy="8" r="7" fill="#1c94e8" /><circle cx="5.5" cy="7" r="1.5" fill="#fff" /><circle cx="10.5" cy="7" r="1.5" fill="#fff" /><path d="M4.5 11q3.5 2 7 0" stroke="#fff" /></Svg>
                <span className="ml-[4px] whitespace-nowrap">联系客服</span>
            </div>
            <TopToolbar />
            <div className="h-px shrink-0" />
            <div className="flex flex-1 min-h-0">
                <LeftNav />
                <ListPanel />
                <div className="flex-1 ml-[3px] flex flex-col min-w-0">
                    <RightToolbars />
                    <div className="h-[587px] bg-black relative shrink-0">
                        <div className="absolute left-[482px] top-[400px] w-[62px] h-[187px] bg-[#adadad]" />
                        <div className="absolute left-[815px] top-[184px] w-[50px] h-[63px] bg-[#adadad]" />
                    </div>
                    <StatusBar />
                    <BottomToolbar />
                    <RebarTable />
                </div>
            </div>
            <PropertyDialog />
            <RebarDialog />
            <svg viewBox="0 0 1108 911" className="absolute inset-0 w-[1108px] h-[911px] pointer-events-none" fill="none">
                <ellipse cx="891" cy="186" rx="81" ry="83" stroke="#b8312a" />
                <ellipse cx="520" cy="754" rx="42" ry="26" stroke="#ee8888" />
                <polygon points="538.5,732 540,733 846,272 842.5,269.5" fill="#f24b4b" />
                <polygon points="851,259 840,264 848,274" fill="#f24b4b" />
            </svg>
        </div>
    );
}
